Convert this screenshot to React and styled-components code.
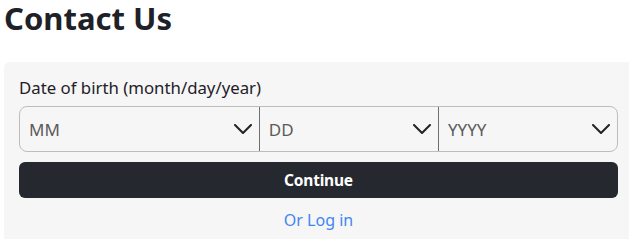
import React from "react";
import styled, { createGlobalStyle } from "styled-components";

const Global = createGlobalStyle`
  html, body { margin: 0; padding: 0; background: #ffffff; }
  body { font-family: "Noto Sans", "Open Sans", sans-serif; color: #1f2128; }
`;

const Page = styled.div`
  padding: 0 0 0 4px;
`;

const Title = styled.h1`
  margin: -2px 0 0 0;
  padding: 0;
  font-size: 31px;
  line-height: 40px;
  font-weight: 700;
  color: #1f2128;
  height: 64px;
`;

const Panel = styled.section`
  background: #f6f6f6;
  border-radius: 6px 0 0 0;
  padding: 14px 11px 0 15px;
  height: 177px;
  box-sizing: border-box;
  display: flex;
  flex-direction: column;
`;

const Label = styled.label`
  font-size: 16.8px;
  line-height: 24px;
  color: #1f2128;
  margin-bottom: 6px;
`;

const SelectGroup = styled.div`
  display: grid;
  grid-template-columns: 4fr 3fr 3fr;
  height: 46px;
  box-sizing: border-box;
  border: 1px solid #bdbdbd;
  border-radius: 8px;
  overflow: hidden;
`;

const Segment = styled.div`
  display: flex;
  align-items: center;
  justify-content: space-between;
  padding: 0 7px 0 9px;
  border-left: ${(p) => (p.$first ? "none" : "1px solid #6f6f6f")};
  font-size: 17px;
  color: #5b5b5b;
  min-width: 0;
`;

const Chevron = () => (
  <svg width="18" height="10" viewBox="0 0 18 10" fill="none">
    <path d="M1 1 L9 9 L17 1" stroke="#222" strokeWidth="2" strokeLinecap="round" strokeLinejoin="round" />
  </svg>
);

const Button = styled.button`
  margin-top: 10px;
  height: 36px;
  border: none;
  border-radius: 6px;
  background: #26282f;
  color: #ffffff;
  font-family: "Noto Sans", sans-serif;
  font-size: 15.5px;
  letter-spacing: -0.2px;
  font-weight: 700;
  cursor: pointer;
`;

const Link = styled.a`
  margin-top: 10px;
  text-align: center;
  color: #3f86f2;
  font-size: 16px;
  line-height: 24px;
  text-decoration: none;
`;

export default function App() {
  return (
    <>
      <Global />
      <Page>
        <Title>Contact Us</Title>
        <Panel>
          <Label>Date of birth (month/day/year)</Label>
          <SelectGroup>
            <Segment $first>
              MM <Chevron />
            </Segment>
            <Segment>
              DD <Chevron />
            </Segment>
            <Segment>
              YYYY <Chevron />
            </Segment>
          </SelectGroup>
          <Button>Continue</Button>
          <Link href="#">Or Log in</Link>
        </Panel>
      </Page>
    </>
  );
}
